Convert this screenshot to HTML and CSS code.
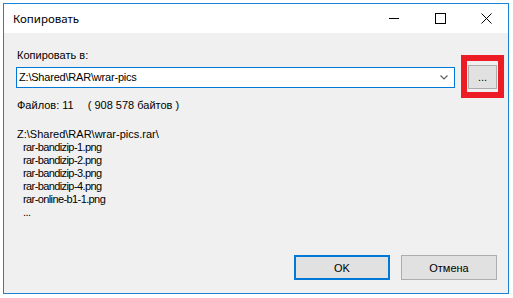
FILE: index.html
```html
<!DOCTYPE html>
<html lang="ru">
<head>
    <meta charset="UTF-8">
    <meta name="viewport" content="width=device-width, initial-scale=1.0">
    <title>Копировать</title>
    <link rel="stylesheet" href="styles.css">
</head>
<body>
    <div class="window">
        <!-- Title bar -->
        <div class="titlebar">
            <div class="title">Копировать</div>
            <div class="caption-buttons">
                <svg class="caption-icon" width="11" height="11" viewBox="0 0 11 11">
                    <path d="M0 5.5H10" stroke="#000" stroke-width="1" fill="none"/>
                </svg>
                <svg class="caption-icon" width="11" height="11" viewBox="0 0 11 11">
                    <rect x="0.5" y="0.5" width="10" height="10" stroke="#000" stroke-width="1" fill="none"/>
                </svg>
                <svg class="caption-icon" width="11" height="11" viewBox="0 0 11 11">
                    <path d="M0.5 0.5L10.5 10.5M10.5 0.5L0.5 10.5" stroke="#000" stroke-width="1" fill="none"/>
                </svg>
            </div>
        </div>

        <!-- Dialog body -->
        <div class="content">
            <div class="label">Копировать в:</div>

            <div class="path-row">
                <div class="combo">
                    <span class="combo-text">Z:\Shared\RAR\wrar-pics</span>
                    <svg class="combo-arrow" width="8" height="5" viewBox="0 0 8 5">
                        <path d="M0.5 0.5L4 4L7.5 0.5" stroke="#606060" stroke-width="1.2" fill="none"/>
                    </svg>
                </div>
                <div class="highlight">
                    <button class="btn btn-browse">...</button>
                </div>
            </div>

            <div class="stats">
                <span>Файлов: 11</span>
                <span class="stats-size">( 908 578 байтов )</span>
            </div>

            <div class="file-list">
                <div>Z:\Shared\RAR\wrar-pics.rar\</div>
                <div class="file">rar-bandizip-1.png</div>
                <div class="file">rar-bandizip-2.png</div>
                <div class="file">rar-bandizip-3.png</div>
                <div class="file">rar-bandizip-4.png</div>
                <div class="file">rar-online-b1-1.png</div>
                <div class="file">...</div>
            </div>

            <div class="actions">
                <button class="btn btn-default">OK</button>
                <button class="btn">Отмена</button>
            </div>
        </div>
    </div>
</body>
</html>
```

FILE: styles.css
```css
* {
    margin: 0;
    padding: 0;
    box-sizing: border-box;
}

body {
    background-color: #fff;
    font-family: "Liberation Sans", Arial, sans-serif;
    font-size: 11px;
    line-height: 13px;
    color: #000;
}

.window {
    width: 506px;
    height: 291px;
    margin: 3px 0 0 3px;
    border: 1px solid #1883d7;
    display: flex;
    flex-direction: column;
}

.titlebar {
    height: 29px;
    background-color: #fff;
    display: flex;
    align-items: center;
    justify-content: space-between;
    padding-left: 9px;
}

.title {
    font-family: "Noto Sans", sans-serif;
    font-size: 11.5px;
}

.caption-buttons {
    display: flex;
    align-items: center;
    gap: 35px;
    padding-right: 16px;
}

.caption-icon {
    display: block;
}

.content {
    flex: 1;
    background-color: #f0f0f0;
    padding: 16px 11px 13px 12px;
    display: flex;
    flex-direction: column;
}

.label {
    padding-left: 1px;
}

.path-row {
    display: flex;
    align-items: center;
    margin-top: 5px;
}

.combo {
    flex: 1;
    height: 21px;
    background-color: #fff;
    border: 1px solid #0078d7;
    display: flex;
    align-items: center;
    justify-content: space-between;
    padding: 0 6px 0 2px;
}

.combo-text {
    letter-spacing: -0.2px;
}

.combo-arrow {
    display: block;
}

.highlight {
    border: 6px solid #ed1c24;
    padding: 4px 1px 3px;
    margin: -12px -7px -10px 6px;
}

.btn {
    font-family: "Liberation Sans", Arial, sans-serif;
    font-size: 11px;
    color: #000;
    background-color: #e1e1e1;
    border: 1px solid #adadad;
    width: 96px;
    height: 25px;
}

.btn-browse {
    display: block;
    width: 29px;
    height: 24px;
}

.btn-default {
    border: 2px solid #0078d7;
}

.stats {
    margin-top: 11px;
    padding-left: 1px;
    display: flex;
    gap: 14px;
}

.file-list {
    margin-top: 16px;
    padding-left: 1px;
}

.file {
    padding-left: 6px;
    letter-spacing: -0.6px;
}

.actions {
    margin-top: auto;
    display: flex;
    justify-content: flex-end;
    gap: 11px;
}
```
